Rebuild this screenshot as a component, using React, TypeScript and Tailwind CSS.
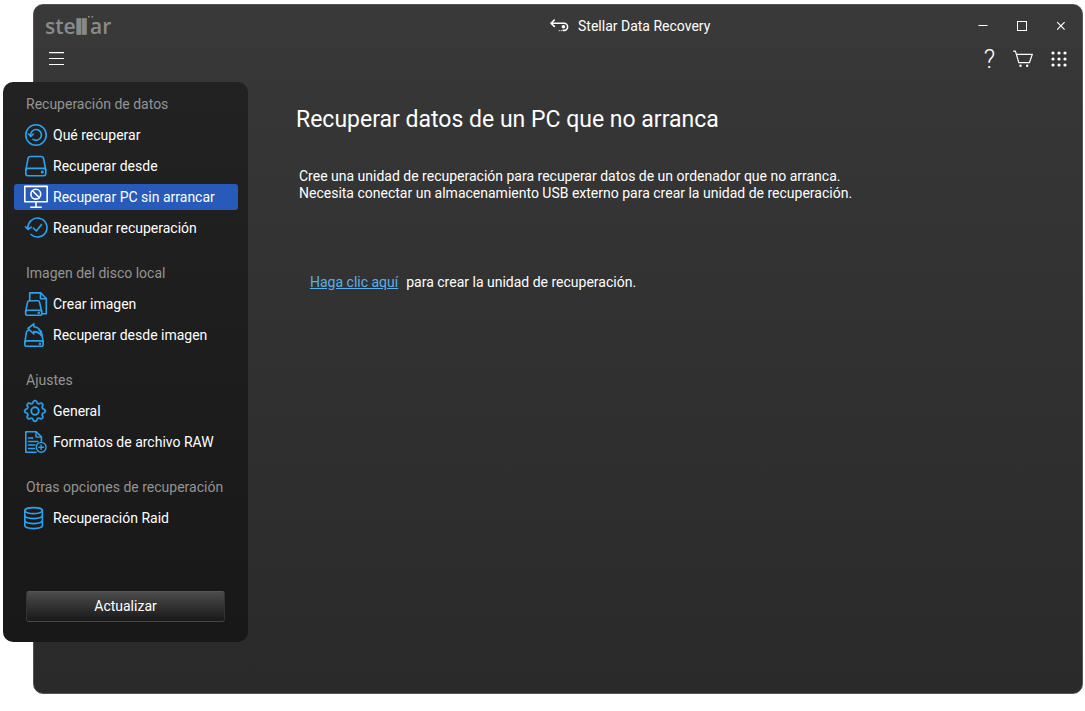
import type { ReactNode } from "react";
import { BsGear } from "react-icons/bs";

type Item = {
  label: string;
  icon: ReactNode;
  active?: boolean;
};

type Group = {
  title: string;
  items: Item[];
};

const Icon = ({ children, className = "" }: { children: ReactNode; className?: string }) => (
  <svg
    viewBox="0 0 24 24"
    fill="none"
    stroke="currentColor"
    strokeWidth="1.6"
    strokeLinecap="round"
    strokeLinejoin="round"
    aria-hidden="true"
    className={`size-6 shrink-0 ${className}`}
  >
    {children}
  </svg>
);

const groups: Group[] = [
  {
    title: "Recuperación de datos",
    items: [
      {
        label: "Qué recuperar",
        icon: (
          <Icon>
            <circle cx="12" cy="12" r="10.2" />
            <path d="M6.7 12.8a5.4 5.4 0 1 1 2.3 3.6" />
            <path d="M4.5 11l2.3 2.4L9.3 11" />
          </Icon>
        ),
      },
      {
        label: "Recuperar desde",
        icon: (
          <Icon>
            <path d="M1.8 16.3L4 4.6a2.6 2.6 0 0 1 2.5-2.1h10.6a2.6 2.6 0 0 1 2.5 2.1l2.2 11.7" />
            <rect x="1.8" y="14.4" width="20" height="7.3" rx="2.2" />
            <circle cx="18.3" cy="18" r="0.7" fill="currentColor" />
          </Icon>
        ),
      },
      {
        label: "Recuperar PC sin arrancar",
        active: true,
        icon: (
          <Icon>
            <rect x="0.8" y="1.4" width="22.4" height="15.4" />
            <circle cx="11.8" cy="9.2" r="4.9" />
            <path d="M8.5 5.8l6.8 6.8M12 17v5M6.8 22.3h10.4" />
          </Icon>
        ),
      },
      {
        label: "Reanudar recuperación",
        icon: (
          <Icon>
            <path d="M4 12.5a9.5 9.5 0 1 1 3 6" />
            <path d="M1.6 10.9l2.5 2.5 3.3-2.3" />
            <path d="M9.3 12l3 3 5.2-6.4" />
          </Icon>
        ),
      },
    ],
  },
  {
    title: "Imagen del disco local",
    items: [
      {
        label: "Crear imagen",
        icon: (
          <Icon>
            <path d="M5.7 8.7V.9h11l5.6 5.6v15.2h-4.4" />
            <path d="M16.5 1v5.7h5.6" />
            <path d="M1.6 19.5l2-9.3a1.8 1.8 0 0 1 1.8-1.4h8.4a1.8 1.8 0 0 1 1.8 1.4l2 9.3" />
            <rect x="1.6" y="18.2" width="16.2" height="5.2" rx="2" />
            <circle cx="14.8" cy="20.8" r="0.5" fill="currentColor" />
          </Icon>
        ),
      },
      {
        label: "Recuperar desde imagen",
        icon: (
          <Icon>
            <path d="M4.5 7.5H4a1.8 1.8 0 0 0-1.5 1.4L.8 19.4M15.2 7.5h.6a1.8 1.8 0 0 1 1.6 1.4l1.8 10.5" />
            <rect x="0.8" y="17.9" width="18.4" height="5.5" rx="2" />
            <path d="M3.9 5.5L9.8.8v2.9c4.8.4 7.4 4.2 7.6 9-1.8-2.8-4.3-4.1-7.6-4.1v2.3z" />
            <circle cx="16" cy="20.7" r="0.5" fill="currentColor" />
          </Icon>
        ),
      },
    ],
  },
  {
    title: "Ajustes",
    items: [
      {
        label: "General",
        icon: (
          <BsGear
            aria-hidden="true"
            className="mr-0.5 size-[22px] shrink-0 overflow-visible stroke-current stroke-[0.3px]"
          />
        ),
      },
      {
        label: "Formatos de archivo RAW",
        icon: (
          <Icon>
            <path d="M12 22.3H1.8V1.7h10.4l5.2 5.2v4.3" />
            <path d="M12 1.8v5.3h5.2M4.5 8h4.3M4.5 11.5h9.5M4.5 15h6.5M4.5 18.5h6" strokeWidth="1.4" />
            <circle cx="17.2" cy="17.3" r="4.9" strokeWidth="1.4" />
            <path d="M17.2 15v4.6M14.9 17.3h4.6" strokeWidth="1.4" />
          </Icon>
        ),
      },
    ],
  },
  {
    title: "Otras opciones de recuperación",
    items: [
      {
        label: "Recuperación Raid",
        icon: (
          <Icon>
            <ellipse cx="9.6" cy="4.6" rx="8.8" ry="3" />
            <path d="M.8 4.6v15c0 1.7 3.9 3 8.8 3s8.8-1.3 8.8-3v-15" />
            <path d="M.8 9.6c0 1.7 3.9 3 8.8 3s8.8-1.3 8.8-3M.8 14.6c0 1.7 3.9 3 8.8 3s8.8-1.3 8.8-3" />
          </Icon>
        ),
      },
    ],
  },
];

const Logo = () => (
  <svg
    viewBox="0 0 72 36"
    role="img"
    aria-label="stellar"
    className="h-9 w-[72px] fill-[#8a8a8a] font-['Open_Sans',sans-serif] text-[21px] font-semibold"
  >
    <text x="0" y="26">ste</text>
    <text x="31" y="26" className="stroke-[#8a8a8a] stroke-[1.5px] font-['Roboto',sans-serif] text-[20px] font-black">ll</text>
    <text x="45" y="26">ar</text>
    <rect x="43" y="8" width="1.6" height="1.6" />
    <rect x="46.5" y="8" width="1.6" height="1.6" />
  </svg>
);

const TitleBar = () => (
  <header className="flex h-[42px] items-center rounded-t-[9px] bg-[#393939]">
    <div className="w-1/2 pl-[11px]">
      <Logo />
    </div>
    <div className="-ml-2 flex items-center gap-2">
      <svg
        viewBox="0 0 20 14"
        fill="none"
        stroke="currentColor"
        strokeWidth="1.6"
        strokeLinecap="round"
        strokeLinejoin="round"
        aria-hidden="true"
        className="h-3.5 w-5"
      >
        <path d="M4.3 1L1 4.2l3.3 3.2M1.3 4.2H14a3.6 3.6 0 0 1 0 7.2h-.8" />
        <circle cx="13.4" cy="7.8" r="1" fill="currentColor" />
        <path d="M11.2 11.6v.1M9.2 11.6v.1" strokeWidth="1.1" />
      </svg>
      <h1>Stellar Data Recovery</h1>
    </div>
    <div className="ml-auto flex pr-0.5">
      <button type="button" aria-label="Minimizar" className="flex h-8 w-[39px] items-center justify-center">
        <svg viewBox="0 0 10 10" stroke="currentColor" aria-hidden="true" className="size-2.5">
          <path d="M0.5 4.5h9" />
        </svg>
      </button>
      <button type="button" aria-label="Maximizar" className="flex h-8 w-[39px] items-center justify-center">
        <svg viewBox="0 0 10 10" fill="none" stroke="currentColor" aria-hidden="true" className="size-2.5">
          <rect x="0.5" y="0.5" width="9" height="9" />
        </svg>
      </button>
      <button type="button" aria-label="Cerrar" className="flex h-8 w-[39px] items-center justify-center">
        <svg viewBox="0 0 10 10" stroke="currentColor" strokeWidth="1.2" aria-hidden="true" className="size-2.5">
          <path d="M1.2 1.2l7.4 7.4M8.6 1.2L1.2 8.6" />
        </svg>
      </button>
    </div>
  </header>
);

const Toolbar = () => (
  <div className="flex h-6 items-center px-[15px]">
    <button type="button" aria-label="Menú">
      <svg viewBox="0 0 16 14" stroke="currentColor" strokeWidth="1.2" aria-hidden="true" className="h-3.5 w-4">
        <path d="M0 0.6h15M0 6.5h15M0 12.5h15" />
      </svg>
    </button>
    <div className="ml-auto flex items-center gap-[18px]">
      <button type="button" aria-label="Ayuda" className="pt-0.5 text-[25px] leading-7 font-light">
        ?
      </button>
      <button type="button" aria-label="Carrito">
        <svg
          viewBox="0 0 20 18"
          fill="none"
          stroke="currentColor"
          strokeWidth="1.2"
          strokeLinejoin="round"
          strokeLinecap="round"
          aria-hidden="true"
          className="h-[18px] w-5"
        >
          <path d="M.6 1.2h1.8l3.4 11.5h10.6l2.9-8.4H3.4" />
          <circle cx="7.5" cy="15.8" r="0.6" fill="currentColor" />
          <circle cx="14.2" cy="15.8" r="0.6" fill="currentColor" />
        </svg>
      </button>
      <button type="button" aria-label="Aplicaciones">
        <svg viewBox="0 0 16 16" fill="currentColor" aria-hidden="true" className="size-4">
          {[2, 8, 14].map((y) =>
            [2, 8, 14].map((x) => <circle key={`${x}-${y}`} cx={x} cy={y} r="1.6" />)
          )}
        </svg>
      </button>
    </div>
  </div>
);

const Sidebar = () => (
  <aside className="-ml-[31px] w-[245px] shrink-0 rounded-[10px] bg-linear-to-b from-[#222222] to-[#181818] pt-[9px] pr-2.5 pb-5 pl-[11px]">
    <nav className="flex flex-col gap-[19px]">
      {groups.map((group) => (
        <section key={group.title}>
          <h2 className="pl-3 leading-[26px] text-[#949494]">{group.title}</h2>
          <ul className="mt-[5px] flex flex-col gap-[5px]">
            {group.items.map((item) => (
              <li key={item.label}>
                <button
                  type="button"
                  aria-current={item.active ? "page" : undefined}
                  className={`flex h-[26px] w-full items-center gap-[5px] rounded-[3px] pl-2.5 ${
                    item.active ? "bg-[#285bb9]" : ""
                  }`}
                >
                  <span className={`flex ${item.active ? "text-white" : "text-[#2aa3ef]"}`}>
                    {item.icon}
                  </span>
                  {item.label}
                </button>
              </li>
            ))}
          </ul>
        </section>
      ))}
    </nav>
    <button
      type="button"
      className="mt-[60px] ml-3 h-[31px] w-[199px] rounded-[3px] border border-t-[#555555] border-x-[#333333] border-b-[#484848] bg-linear-to-b from-[#4c4c4c] to-[#191919] pb-0.5"
    >
      Actualizar
    </button>
  </aside>
);

const App = () => {
  return (
    <div className="flex min-h-screen flex-col bg-white pt-1 pr-0.5 pb-[17px] pl-[33px] font-['Roboto',sans-serif] text-sm text-white">
      <div className="flex flex-1 flex-col rounded-[10px] border border-[#555555] bg-linear-to-b from-[#383838] to-[#2a2a2a]">
        <TitleBar />
        <Toolbar />
        <div className="mt-[11px] flex items-start">
          <Sidebar />
          <main className="min-w-0 flex-1 pt-[22px] pl-12">
            <h2 className="text-[23px] leading-8">Recuperar datos de un PC que no arranca</h2>
            <p className="mt-8 pl-[3px] leading-[17px]">
              Cree una unidad de recuperación para recuperar datos de un ordenador que no arranca.
              <br />
              Necesita conectar un almacenamiento USB externo para crear la unidad de recuperación.
            </p>
            <p className="mt-[70px] flex gap-2 pl-[14px]">
              <a href="#crear" className="text-[#5ab0e8] underline">
                Haga clic aquí
              </a>
              <span>para crear la unidad de recuperación.</span>
            </p>
          </main>
        </div>
      </div>
    </div>
  );
};

export default App;
